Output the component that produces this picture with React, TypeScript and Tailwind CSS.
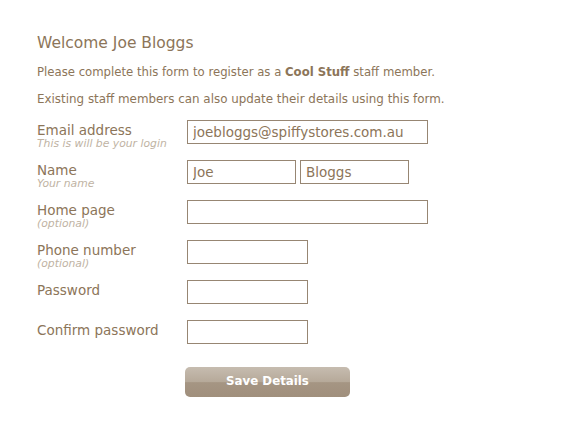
const font = { fontFamily: '"DejaVu Sans", "Liberation Sans", sans-serif' };

interface RowProps {
  label: string;
  hint?: string;
  children: React.ReactNode;
}

const Row = ({ label, hint, children }: RowProps) => (
  <div className="flex h-[40px]">
    <div className="w-[150px] pt-[2px]">
      <div className="text-[13.5px] leading-[16px] text-[#8c7559]">{label}</div>
      {hint && <div className="text-[10.8px] leading-[12px] italic text-[#c0b3a3]">{hint}</div>}
    </div>
    <div className="flex gap-[4px]">{children}</div>
  </div>
);

const Field = ({ w, value = "" }: { w: string; value?: string }) => (
  <input
    readOnly
    value={value}
    className={`${w} h-[24px] border border-[#978673] bg-white px-[5px] text-[13.5px] text-[#8c7559] outline-none`}
    style={font}
  />
);

const App = () => {
  return (
    <div className="w-[570px] h-[432px] bg-white pl-[37px] pt-[33px]" style={font}>
      <h1 className="text-[15.5px] leading-[20px] text-[#8c7559]">Welcome Joe Bloggs</h1>
      <p className="mt-[11px] text-[11.7px] leading-[16px] text-[#8c7559]">
        Please complete this form to register as a <b>Cool Stuff</b> staff member.
      </p>
      <p className="mt-[11px] text-[11.9px] leading-[16px] text-[#8c7559]">
        Existing staff members can also update their details using this form.
      </p>
      <div className="mt-[13px]">
        <Row label="Email address" hint="This is will be your login">
          <Field w="w-[241px]" value="joebloggs@spiffystores.com.au" />
        </Row>
        <Row label="Name" hint="Your name">
          <Field w="w-[109px]" value="Joe" />
          <Field w="w-[109px]" value="Bloggs" />
        </Row>
        <Row label="Home page" hint="(optional)">
          <Field w="w-[241px]" />
        </Row>
        <Row label="Phone number" hint="(optional)">
          <Field w="w-[121px]" />
        </Row>
        <Row label="Password">
          <Field w="w-[121px]" />
        </Row>
        <Row label="Confirm password">
          <Field w="w-[121px]" />
        </Row>
      </div>
      <div className="mt-[7px] ml-[148px]">
        <button
          className="w-[165px] h-[30px] rounded-[5px] bg-[linear-gradient(to_bottom,#c6bcb0_0%,#b6a999_50%,#a59583_52%,#a08f7c_100%)] text-[11.8px] font-bold text-white"
          style={font}
        >
          Save Details
        </button>
      </div>
    </div>
  );
};

export default App;
